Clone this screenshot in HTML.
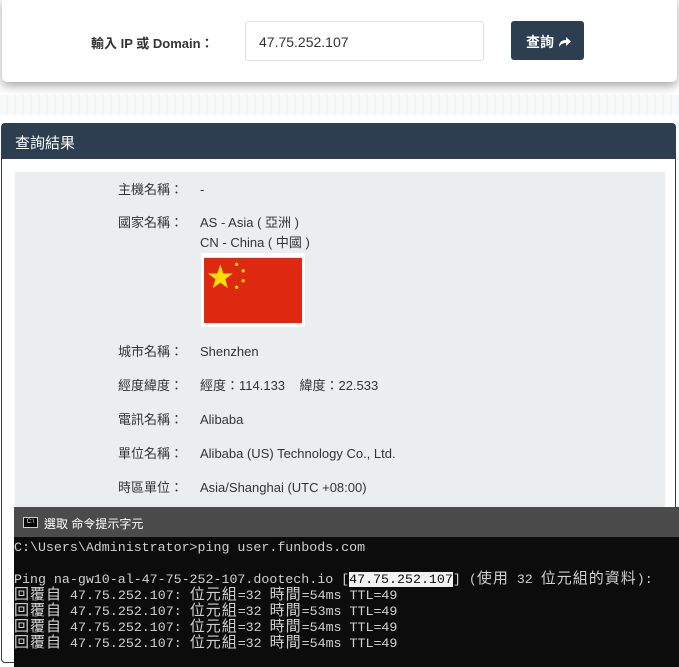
<!DOCTYPE html>
<html><head><meta charset="utf-8"><style>
*{margin:0;padding:0;box-sizing:border-box}
html,body{width:679px;height:667px;overflow:hidden}
body{background:#fff;font-family:"Liberation Sans","Noto Sans CJK TC",sans-serif;position:relative;color:#333}
.top{position:absolute;left:2px;top:-4px;width:675px;height:86px;background:#fff;border-radius:5px;box-shadow:0 4px 10px rgba(0,0,0,.35)}
.lbl{position:absolute;left:89px;top:37px;font-size:13px;font-weight:bold;color:#333}
.inp{position:absolute;left:243px;top:25px;width:239px;height:40px;border:1px solid #dde2e6;border-radius:3px;font-size:14px;padding:12px 13px;color:#333}
.btn{position:absolute;left:509px;top:25px;width:73px;height:39px;background:#2c3e50;border-radius:3px;color:#fff;font-size:14px;font-weight:bold;padding:11px 0 0 15px}
.stripe{position:absolute;left:0;top:95px;width:679px;height:20px;background:repeating-linear-gradient(90deg,#f6f7f8 0 6px,#eceef0 6px 8px);opacity:.7}
.card{position:absolute;left:1px;top:123px;width:675px;height:540px;border:1px solid #2c3e50;border-radius:4px;background:#fff}
.hd{height:35px;background:#2c3e50;color:#fff;font-size:15px;padding:8px 0 0 13px}
.in{position:absolute;left:13px;top:48px;width:650px;height:340px;background:#ebeeef}
.r{position:absolute;font-size:13px;line-height:16px;color:#333;white-space:nowrap}
.term{position:absolute;left:14px;top:507px;width:665px;height:160px;background:#0c0c0c}
.tb{height:30px;background:#4b4b4b;color:#fff;font-size:12px;padding:8px 0 0 30px;position:relative}
.ic{position:absolute;left:9px;top:10px;width:15px;height:11px;background:#000;border:1px solid #ccc;font-size:6px;color:#fff;line-height:9px;text-align:center}
pre{font-family:"Liberation Mono","Noto Sans CJK TC",monospace;font-size:13.3px;line-height:16px;color:#d0d0d0;padding-top:3px}
.c{font-size:15px;letter-spacing:1px;line-height:16px}
.sel{background:#f2f2f2;color:#0c0c0c}
</style></head><body>
<div class="top">
<div class="lbl">輸入 IP 或 Domain：</div>
<div class="inp">47.75.252.107</div>
<div class="btn">查詢 <svg width="13" height="12" viewBox="0 0 13 12" style="vertical-align:-1px"><path d="M1 11C1 6 4 4 8 4V1l5 4.5L8 10V7C5 7 3 8 1 11Z" fill="#fff"/></svg></div>
</div>
<div class="stripe"></div>
<div class="card">
<div class="hd">查詢結果</div>
<div class="in">
<div class="r" style="left:103px;top:10px">主機名稱：</div><div class="r" style="left:185px;top:10px">-</div>
<div class="r" style="left:103px;top:43px">國家名稱：</div><div class="r" style="left:185px;top:43px">AS - Asia ( 亞洲 )</div>
<div class="r" style="left:185px;top:63px">CN - China ( 中國 )</div>
<div style="position:absolute;left:186px;top:81px;width:104px;height:74px;background:#fff;border-radius:2px">
<svg width="98" height="67" viewBox="0 0 30 20" style="position:absolute;left:3px;top:4px"><rect width="30" height="20" fill="#de2910"/><g fill="#ffde00"><polygon points="5,2 5.9,4.8 8.8,4.8 6.5,6.5 7.3,9.3 5,7.6 2.7,9.3 3.5,6.5 1.2,4.8 4.1,4.8"/><circle cx="10" cy="2" r=".5"/><circle cx="12" cy="4" r=".5"/><circle cx="12" cy="7" r=".5"/><circle cx="10" cy="9" r=".5"/></g></svg></div>
<div class="r" style="left:103px;top:172px">城市名稱：</div><div class="r" style="left:185px;top:172px">Shenzhen</div>
<div class="r" style="left:103px;top:206px">經度緯度：</div><div class="r" style="left:185px;top:206px">經度：114.133&nbsp;&nbsp;&nbsp; 緯度：22.533</div>
<div class="r" style="left:103px;top:240px">電訊名稱：</div><div class="r" style="left:185px;top:240px">Alibaba</div>
<div class="r" style="left:103px;top:274px">單位名稱：</div><div class="r" style="left:185px;top:274px">Alibaba (US) Technology Co., Ltd.</div>
<div class="r" style="left:103px;top:308px">時區單位：</div><div class="r" style="left:185px;top:308px">Asia/Shanghai (UTC +08:00)</div>
</div>
</div>
<div class="term">
<div class="tb"><div class="ic">C:\</div>選取 命令提示字元</div>
<pre>C:\Users\Administrator&gt;ping user.funbods.com

Ping na-gw10-al-47-75-252-107.dootech.io [<span class="sel">47.75.252.107</span>] (<span class="c">使用</span> 32 <span class="c">位元組的資料</span>):
<span class="c">回覆自</span> 47.75.252.107: <span class="c">位元組</span>=32 <span class="c">時間</span>=54ms TTL=49
<span class="c">回覆自</span> 47.75.252.107: <span class="c">位元組</span>=32 <span class="c">時間</span>=53ms TTL=49
<span class="c">回覆自</span> 47.75.252.107: <span class="c">位元組</span>=32 <span class="c">時間</span>=54ms TTL=49
<span class="c">回覆自</span> 47.75.252.107: <span class="c">位元組</span>=32 <span class="c">時間</span>=54ms TTL=49</pre>
</div>
</body></html>
